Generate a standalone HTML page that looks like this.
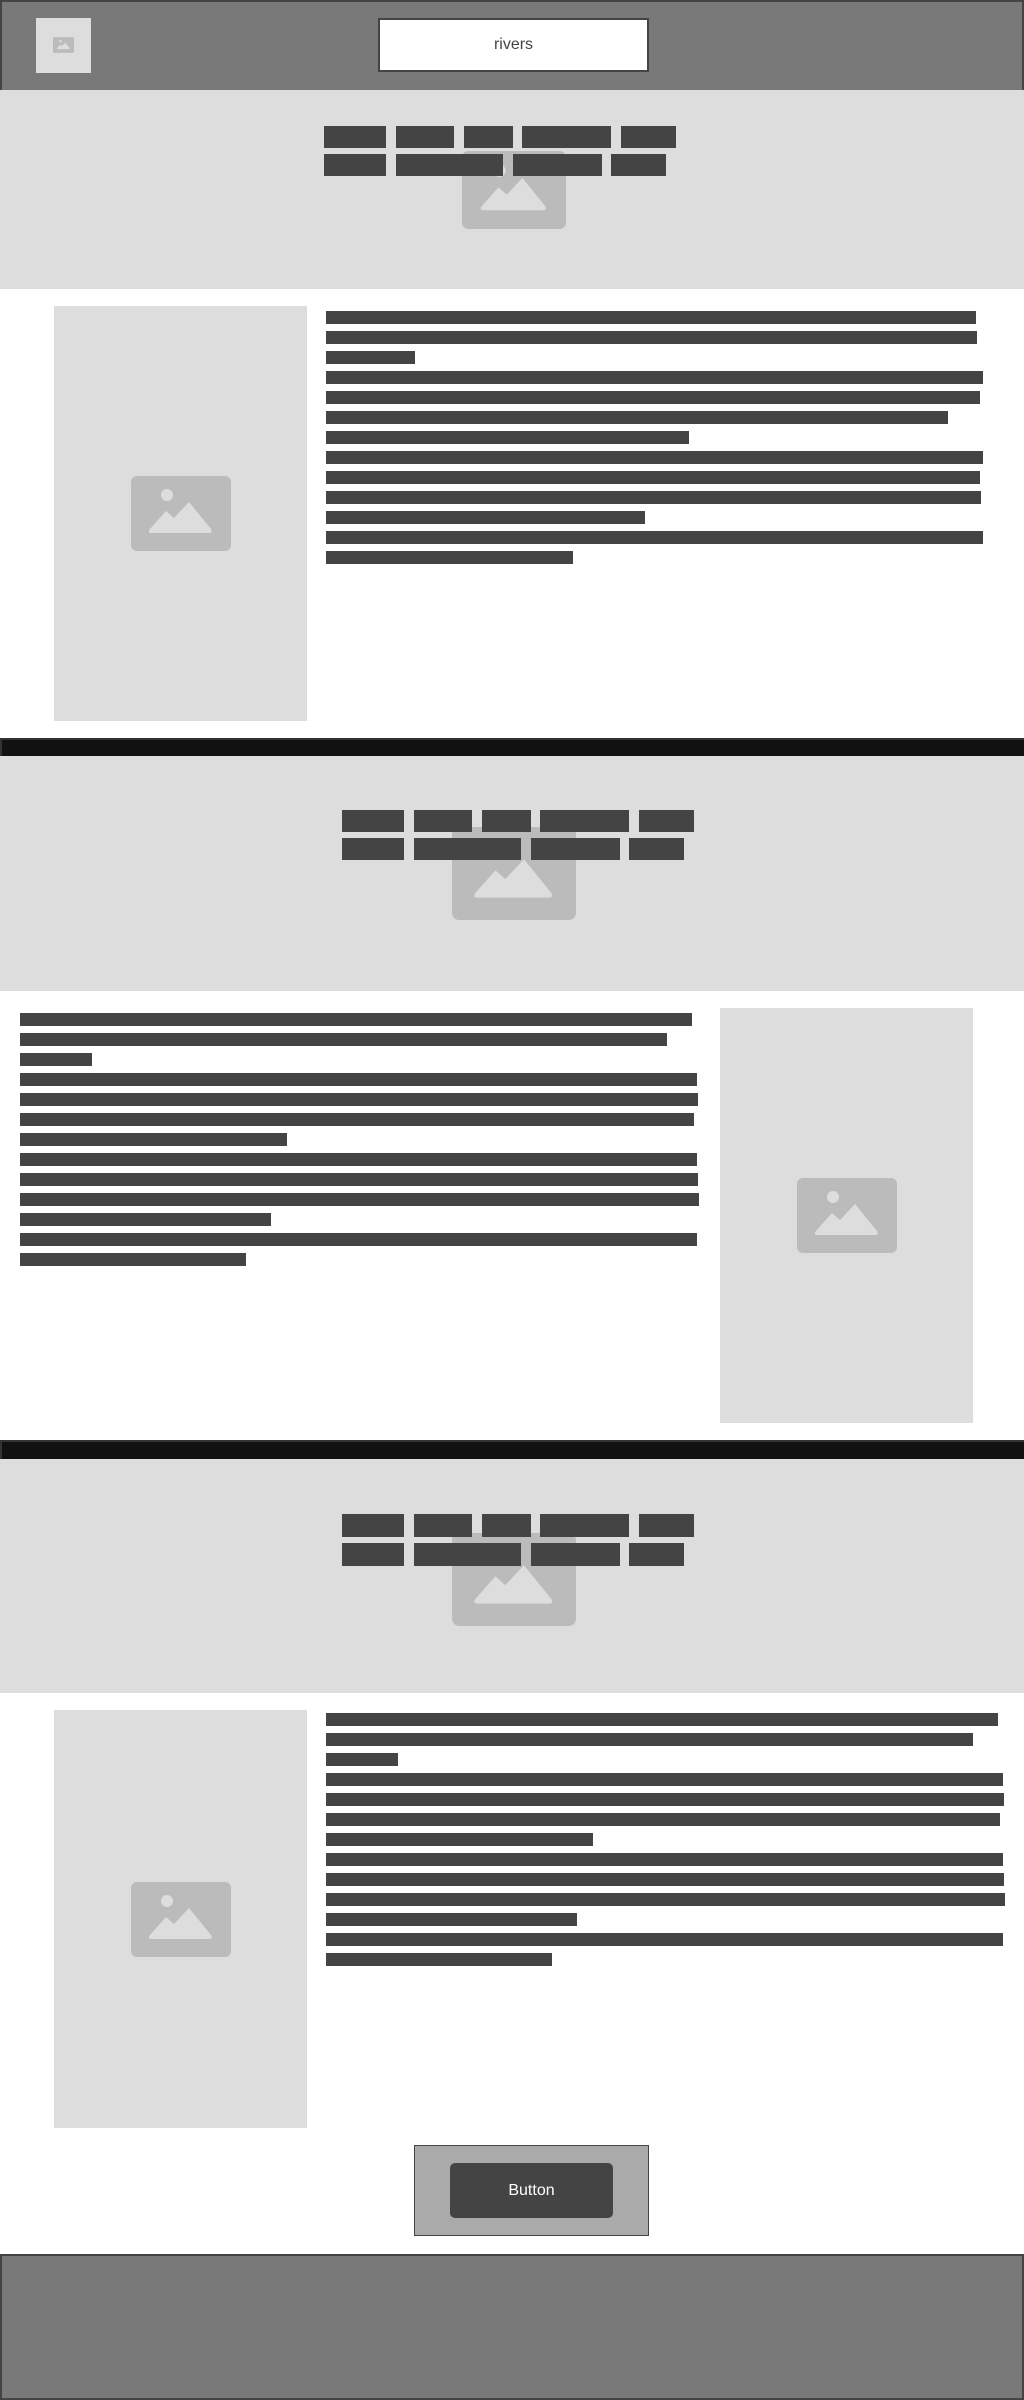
<!DOCTYPE html>
<html><head><meta charset="utf-8"><style>
*{margin:0;padding:0;box-sizing:border-box}
body{width:1024px;height:2400px;position:relative;background:#fff;font-family:"Liberation Sans",sans-serif;overflow:hidden}
.a{position:absolute}
.hdr{left:0;top:0;width:1024px;height:90px;background:#797979;border:2px solid #444;border-bottom:none}
.hero{left:0;width:1024px;background:#dddddd}
.band{left:0;width:1024px;background:#111;border-top:2px solid #333;border-left:2px solid #333}
.b{position:absolute;background:#444;height:13px}
.n{position:absolute;background:#444}
.ph{position:absolute;background:#dddddd}
svg{position:absolute;display:block}
</style></head><body>
<svg width="0" height="0" style="position:absolute"><defs>
<symbol id="ic" viewBox="0 0 100 75"><rect x="0" y="0" width="100" height="75" rx="6" fill="#bbb"/><circle cx="36" cy="19" r="6" fill="#ddd"/><path d="M19 53 L35 35 L43 42 L58 26 L80 53 Q82 57 78 57 L21 57 Q16 57 19 53 Z" fill="#ddd"/></symbol>
</defs></svg>

<div class="a hdr"></div>
<div class="ph" style="left:36px;top:18px;width:55px;height:55px"></div>
<svg style="left:53px;top:37px" width="21" height="16"><use href="#ic"/></svg>
<div class="a" style="left:378px;top:18px;width:271px;height:54px;background:#fff;border:2px solid #444;color:#444;font-size:16px;line-height:50px;text-align:center">rivers</div>

<!-- Section 1 -->
<div class="a hero" style="top:90px;height:199px"></div>
<svg style="left:462px;top:151px" width="104" height="78"><use href="#ic"/></svg>
<div class="n" style="left:324px;top:126px;width:62px;height:22px"></div>
<div class="n" style="left:396px;top:126px;width:58px;height:22px"></div>
<div class="n" style="left:464px;top:126px;width:49px;height:22px"></div>
<div class="n" style="left:522px;top:126px;width:89px;height:22px"></div>
<div class="n" style="left:621px;top:126px;width:55px;height:22px"></div>
<div class="n" style="left:324px;top:154px;width:62px;height:22px"></div>
<div class="n" style="left:396px;top:154px;width:107px;height:22px"></div>
<div class="n" style="left:513px;top:154px;width:89px;height:22px"></div>
<div class="n" style="left:611px;top:154px;width:55px;height:22px"></div>

<div class="ph" style="left:54px;top:306px;width:253px;height:415px"></div>
<svg style="left:131px;top:476px" width="100" height="75"><use href="#ic"/></svg>
<div class="b" style="left:326px;top:311px;width:650px"></div>
<div class="b" style="left:326px;top:331px;width:651px"></div>
<div class="b" style="left:326px;top:351px;width:89px"></div>
<div class="b" style="left:326px;top:371px;width:657px"></div>
<div class="b" style="left:326px;top:391px;width:654px"></div>
<div class="b" style="left:326px;top:411px;width:622px"></div>
<div class="b" style="left:326px;top:431px;width:363px"></div>
<div class="b" style="left:326px;top:451px;width:657px"></div>
<div class="b" style="left:326px;top:471px;width:654px"></div>
<div class="b" style="left:326px;top:491px;width:655px"></div>
<div class="b" style="left:326px;top:511px;width:319px"></div>
<div class="b" style="left:326px;top:531px;width:657px"></div>
<div class="b" style="left:326px;top:551px;width:247px"></div>

<div class="a band" style="top:738px;height:18px"></div>

<!-- Section 2 -->
<div class="a hero" style="top:756px;height:235px"></div>
<svg style="left:452px;top:827px" width="124" height="93"><use href="#ic"/></svg>
<div class="n" style="left:342px;top:810px;width:62px;height:22px"></div>
<div class="n" style="left:414px;top:810px;width:58px;height:22px"></div>
<div class="n" style="left:482px;top:810px;width:49px;height:22px"></div>
<div class="n" style="left:540px;top:810px;width:89px;height:22px"></div>
<div class="n" style="left:639px;top:810px;width:55px;height:22px"></div>
<div class="n" style="left:342px;top:838px;width:62px;height:22px"></div>
<div class="n" style="left:414px;top:838px;width:107px;height:22px"></div>
<div class="n" style="left:531px;top:838px;width:89px;height:22px"></div>
<div class="n" style="left:629px;top:838px;width:55px;height:22px"></div>

<div class="b" style="left:20px;top:1013px;width:672px"></div>
<div class="b" style="left:20px;top:1033px;width:647px"></div>
<div class="b" style="left:20px;top:1053px;width:72px"></div>
<div class="b" style="left:20px;top:1073px;width:677px"></div>
<div class="b" style="left:20px;top:1093px;width:678px"></div>
<div class="b" style="left:20px;top:1113px;width:674px"></div>
<div class="b" style="left:20px;top:1133px;width:267px"></div>
<div class="b" style="left:20px;top:1153px;width:677px"></div>
<div class="b" style="left:20px;top:1173px;width:678px"></div>
<div class="b" style="left:20px;top:1193px;width:679px"></div>
<div class="b" style="left:20px;top:1213px;width:251px"></div>
<div class="b" style="left:20px;top:1233px;width:677px"></div>
<div class="b" style="left:20px;top:1253px;width:226px"></div>
<div class="ph" style="left:720px;top:1008px;width:253px;height:415px"></div>
<svg style="left:797px;top:1178px" width="100" height="75"><use href="#ic"/></svg>

<div class="a band" style="top:1440px;height:19px"></div>

<!-- Section 3 -->
<div class="a hero" style="top:1459px;height:234px"></div>
<svg style="left:452px;top:1532px" width="124" height="95"><use href="#ic"/></svg>
<div class="n" style="left:342px;top:1514px;width:62px;height:23px"></div>
<div class="n" style="left:414px;top:1514px;width:58px;height:23px"></div>
<div class="n" style="left:482px;top:1514px;width:49px;height:23px"></div>
<div class="n" style="left:540px;top:1514px;width:89px;height:23px"></div>
<div class="n" style="left:639px;top:1514px;width:55px;height:23px"></div>
<div class="n" style="left:342px;top:1543px;width:62px;height:23px"></div>
<div class="n" style="left:414px;top:1543px;width:107px;height:23px"></div>
<div class="n" style="left:531px;top:1543px;width:89px;height:23px"></div>
<div class="n" style="left:629px;top:1543px;width:55px;height:23px"></div>

<div class="ph" style="left:54px;top:1710px;width:253px;height:418px"></div>
<svg style="left:131px;top:1882px" width="100" height="75"><use href="#ic"/></svg>
<div class="b" style="left:326px;top:1713px;width:672px"></div>
<div class="b" style="left:326px;top:1733px;width:647px"></div>
<div class="b" style="left:326px;top:1753px;width:72px"></div>
<div class="b" style="left:326px;top:1773px;width:677px"></div>
<div class="b" style="left:326px;top:1793px;width:678px"></div>
<div class="b" style="left:326px;top:1813px;width:674px"></div>
<div class="b" style="left:326px;top:1833px;width:267px"></div>
<div class="b" style="left:326px;top:1853px;width:677px"></div>
<div class="b" style="left:326px;top:1873px;width:678px"></div>
<div class="b" style="left:326px;top:1893px;width:679px"></div>
<div class="b" style="left:326px;top:1913px;width:251px"></div>
<div class="b" style="left:326px;top:1933px;width:677px"></div>
<div class="b" style="left:326px;top:1953px;width:226px"></div>

<div class="a" style="left:414px;top:2145px;width:235px;height:91px;background:#aaa;border:1px solid #444"></div>
<div class="a" style="left:450px;top:2163px;width:163px;height:55px;background:#444;border-radius:5px;color:#fff;font-size:16px;line-height:55px;text-align:center">Button</div>

<div class="a" style="left:0;top:2254px;width:1024px;height:146px;background:#797979;border:2px solid #444"></div>
</body></html>
